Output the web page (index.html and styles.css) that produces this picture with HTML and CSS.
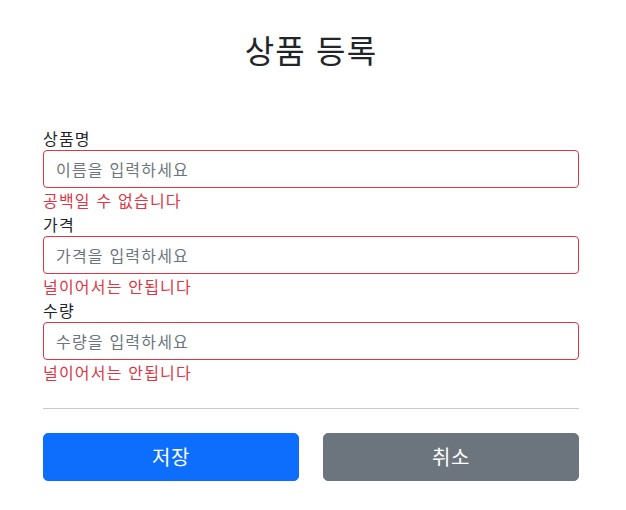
FILE: index.html
```html
<!DOCTYPE html>
<html lang="ko">
<head>
<meta charset="utf-8">
<link rel="stylesheet" href="styles.css">
</head>
<body>
<div class="container">
  <div class="header">
    <h2 class="title">상품 등록</h2>
  </div>
  <form class="form">
    <div class="field">
      <label class="label">상품명</label>
      <input class="input" type="text" placeholder="이름을 입력하세요">
      <div class="field-error">공백일 수 없습니다</div>
    </div>
    <div class="field">
      <label class="label">가격</label>
      <input class="input" type="text" placeholder="가격을 입력하세요">
      <div class="field-error">널이어서는 안됩니다</div>
    </div>
    <div class="field">
      <label class="label">수량</label>
      <input class="input" type="text" placeholder="수량을 입력하세요">
      <div class="field-error">널이어서는 안됩니다</div>
    </div>
    <hr class="divider">
    <div class="actions">
      <button type="button" class="btn btn-primary">저장</button>
      <button type="button" class="btn btn-secondary">취소</button>
    </div>
  </form>
</div>
</body>
</html>
```

FILE: styles.css
```css
* { box-sizing: border-box; }
html, body {
  margin: 0;
  padding: 0;
  background: #fff;
}
body {
  font-family: "Noto Sans CJK JP", "Noto Sans", sans-serif;
  font-size: 16px;
  line-height: 1.5;
  color: #212529;
  letter-spacing: 0.075em;
}
.container {
  width: 536px;
  margin-left: 43px;
}
.header {
  padding-top: 30px;
  padding-bottom: 50px;
  text-align: center;
}
.title {
  margin: 0 0 8px 0;
  font-size: 32px;
  font-weight: 400;
  line-height: 1.2;
}
.form { margin: 0; }
.field { display: flex; flex-direction: column; }
.label {
  display: block;
  font-size: 16px;
  line-height: 24px;
}
.input {
  display: block;
  width: 100%;
  height: 38px;
  padding: 6px 12px;
  font-family: inherit;
  font-size: 16px;
  line-height: 24px;
  letter-spacing: inherit;
  color: #212529;
  background: #fff;
  border: 1px solid #dc3545;
  border-radius: 4px;
  outline: none;
}
.input::placeholder { color: #6c757d; opacity: 1; }
.field-error {
  color: #dc3545;
  font-size: 16px;
  line-height: 24px;
}
.divider {
  margin: 24px 0;
  border: 0;
  border-top: 1px solid #c8c9ca;
  height: 0;
}
.actions {
  display: grid;
  grid-template-columns: 1fr 1fr;
  column-gap: 24px;
}
.btn {
  display: block;
  width: 100%;
  height: 48px;
  padding: 8px 16px;
  font-family: inherit;
  font-size: 20px;
  line-height: 30px;
  letter-spacing: 0.03em;
  color: #fff;
  border: 1px solid transparent;
  border-radius: 5px;
  cursor: pointer;
}
.btn-primary { background: #0d6efd; border-color: #0d6efd; }
.btn-secondary { background: #6c757d; border-color: #6c757d; }
```
